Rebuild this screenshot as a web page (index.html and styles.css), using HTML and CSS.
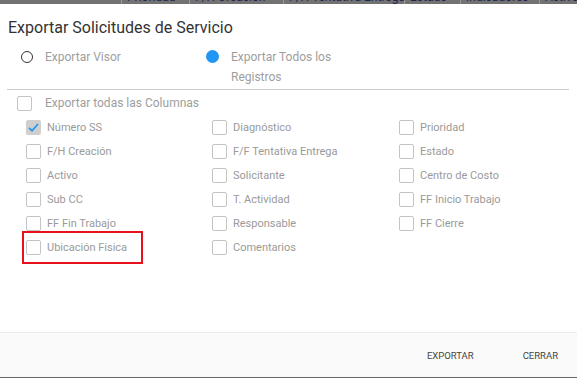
FILE: index.html
```html
<!DOCTYPE html>
<html lang="es">
  <head>
    <meta charset="UTF-8">
    <title>Exportar Solicitudes de Servicio</title>
    <link rel="stylesheet" href="styles.css">
  </head>
  <body>
    <!-- table behind the dialog, mostly hidden -->
    <div class="backdrop-head">
      <div class="head-row">
        <span class="head-cell head-cell--first"></span>
        <span class="head-cell" style="width: 68px">Prioridad</span>
        <span class="head-cell" style="width: 94px">F/H Creación</span>
        <span class="head-cell" style="width: 121px">F/H Tentativa Entrega</span>
        <span class="head-cell" style="width: 56px">Estado</span>
        <span class="head-cell" style="width: 79px">Indicadores</span>
        <span class="head-cell" style="width: 38px">Activo</span>
      </div>
    </div>

    <div class="dialog">
      <h2 class="dialog-title">Exportar Solicitudes de Servicio</h2>

      <div class="export-mode">
        <label class="radio-option radio-option--visor">
          <span class="radio"></span>
          <span class="radio-label">Exportar Visor</span>
        </label>
        <label class="radio-option">
          <span class="radio radio--on"></span>
          <span class="radio-label radio-label--wrap">Exportar Todos los Registros</span>
        </label>
      </div>

      <div class="divider"></div>

      <label class="all-columns">
        <span class="checkbox"></span>
        <span class="all-columns-label">Exportar todas las Columnas</span>
      </label>

      <div class="column-grid">
        <label class="column-item"><span class="checkbox checkbox--on"><svg viewBox="0 0 16 16"><path d="M3.2 8.4 L6.4 11.4 L12.8 4.2" /></svg></span>Número SS</label>
        <label class="column-item"><span class="checkbox"></span>Diagnóstico</label>
        <label class="column-item"><span class="checkbox"></span>Prioridad</label>

        <label class="column-item"><span class="checkbox"></span>F/H Creación</label>
        <label class="column-item"><span class="checkbox"></span>F/F Tentativa Entrega</label>
        <label class="column-item"><span class="checkbox"></span>Estado</label>

        <label class="column-item"><span class="checkbox"></span>Activo</label>
        <label class="column-item"><span class="checkbox"></span>Solicitante</label>
        <label class="column-item"><span class="checkbox"></span>Centro de Costo</label>

        <label class="column-item"><span class="checkbox"></span>Sub CC</label>
        <label class="column-item"><span class="checkbox"></span>T. Actividad</label>
        <label class="column-item"><span class="checkbox"></span>FF Inicio Trabajo</label>

        <label class="column-item"><span class="checkbox"></span>FF Fin Trabajo</label>
        <label class="column-item"><span class="checkbox"></span>Responsable</label>
        <label class="column-item"><span class="checkbox"></span>FF Cierre</label>

        <label class="column-item column-item--marked"><span class="checkbox"></span>Ubicación Fisica</label>
        <label class="column-item"><span class="checkbox"></span>Comentarios</label>
      </div>

      <div class="dialog-footer">
        <button class="flat-button">Exportar</button>
        <button class="flat-button">Cerrar</button>
      </div>
    </div>

    <div class="backdrop-foot"></div>
  </body>
</html>
```

FILE: styles.css
```css
:root {
  font-family: Roboto, "Liberation Sans", Arial, sans-serif;
  -webkit-font-smoothing: antialiased;
}

body {
  margin: 0;
  background: #6e6e6e;
  width: 577px;
  height: 378px;
  overflow: hidden;
}

.backdrop-head {
  height: 4px;
  overflow: hidden;
  background: #727272;
}

.head-row {
  display: flex;
  margin-top: -9px;
  height: 13px;
}

.head-cell {
  box-sizing: border-box;
  flex-shrink: 0;
  border-left: 1px solid #9a9a9a;
  padding-left: 5px;
  font-size: 12px;
  line-height: 13px;
  color: #1e2550;
  white-space: nowrap;
  overflow: hidden;
}

.head-cell--first {
  width: 121px;
  border-left: none;
}

.dialog {
  height: 373px;
  background: #ffffff;
  display: flex;
  flex-direction: column;
}

.dialog-title {
  margin: 0;
  padding: 13px 8px 0;
  font-size: 16px;
  line-height: 22px;
  font-weight: 400;
  color: #333333;
}

.export-mode {
  display: flex;
  margin-top: 8px;
  padding-left: 21px;
}

.radio-option {
  display: flex;
  align-items: flex-start;
  gap: 12px;
}

.radio-option--visor {
  width: 185px;
}

.radio {
  box-sizing: border-box;
  width: 12px;
  height: 12px;
  margin-top: 4px;
  border: 1.5px solid #333333;
  border-radius: 50%;
}

.radio--on {
  width: 13px;
  height: 13px;
  margin-top: 3px;
  border: none;
  background: #2196f3;
}

.radio-label {
  font-size: 12px;
  line-height: 20px;
  color: #9e9e9e;
}

.radio-label--wrap {
  width: 104px;
}

.divider {
  height: 1px;
  margin: 2px 8px 0 7px;
  background: #cccccc;
}

.all-columns {
  display: flex;
  align-items: center;
  gap: 13px;
  height: 20px;
  margin-top: 3px;
  padding-left: 17px;
}

.all-columns-label {
  font-size: 12px;
  color: #9e9e9e;
}

.column-grid {
  display: grid;
  grid-template-columns: 186px 187px 1fr;
  grid-auto-rows: 24px;
  margin-top: 2px;
  padding-left: 26px;
}

.column-item {
  position: relative;
  display: flex;
  align-items: center;
  gap: 6px;
  font-size: 11px;
  color: #9a9a9a;
}

.column-item--marked::after {
  content: "";
  position: absolute;
  left: -4px;
  top: -4px;
  width: 121px;
  height: 33px;
  box-sizing: border-box;
  border: 2px solid #e8101a;
}

.checkbox {
  box-sizing: border-box;
  width: 15px;
  height: 15px;
  border: 1.5px solid #c4c4c4;
  border-radius: 2px;
  flex-shrink: 0;
}

.checkbox--on {
  border: none;
  background: #cfcfcf;
}

.checkbox--on svg {
  display: block;
  width: 15px;
  height: 15px;
  fill: none;
  stroke: #2196f3;
  stroke-width: 1.8;
}

.dialog-footer {
  margin-top: auto;
  height: 44px;
  border-top: 1px solid #ececec;
  background: #fafafa;
  display: flex;
  justify-content: flex-end;
  align-items: center;
  gap: 49px;
  padding-right: 19px;
}

.flat-button {
  border: none;
  background: none;
  padding: 0;
  font-family: inherit;
  font-size: 9.5px;
  font-weight: 400;
  text-transform: uppercase;
  color: #444444;
}

.backdrop-foot {
  height: 1px;
  background: #666666;
}
```
